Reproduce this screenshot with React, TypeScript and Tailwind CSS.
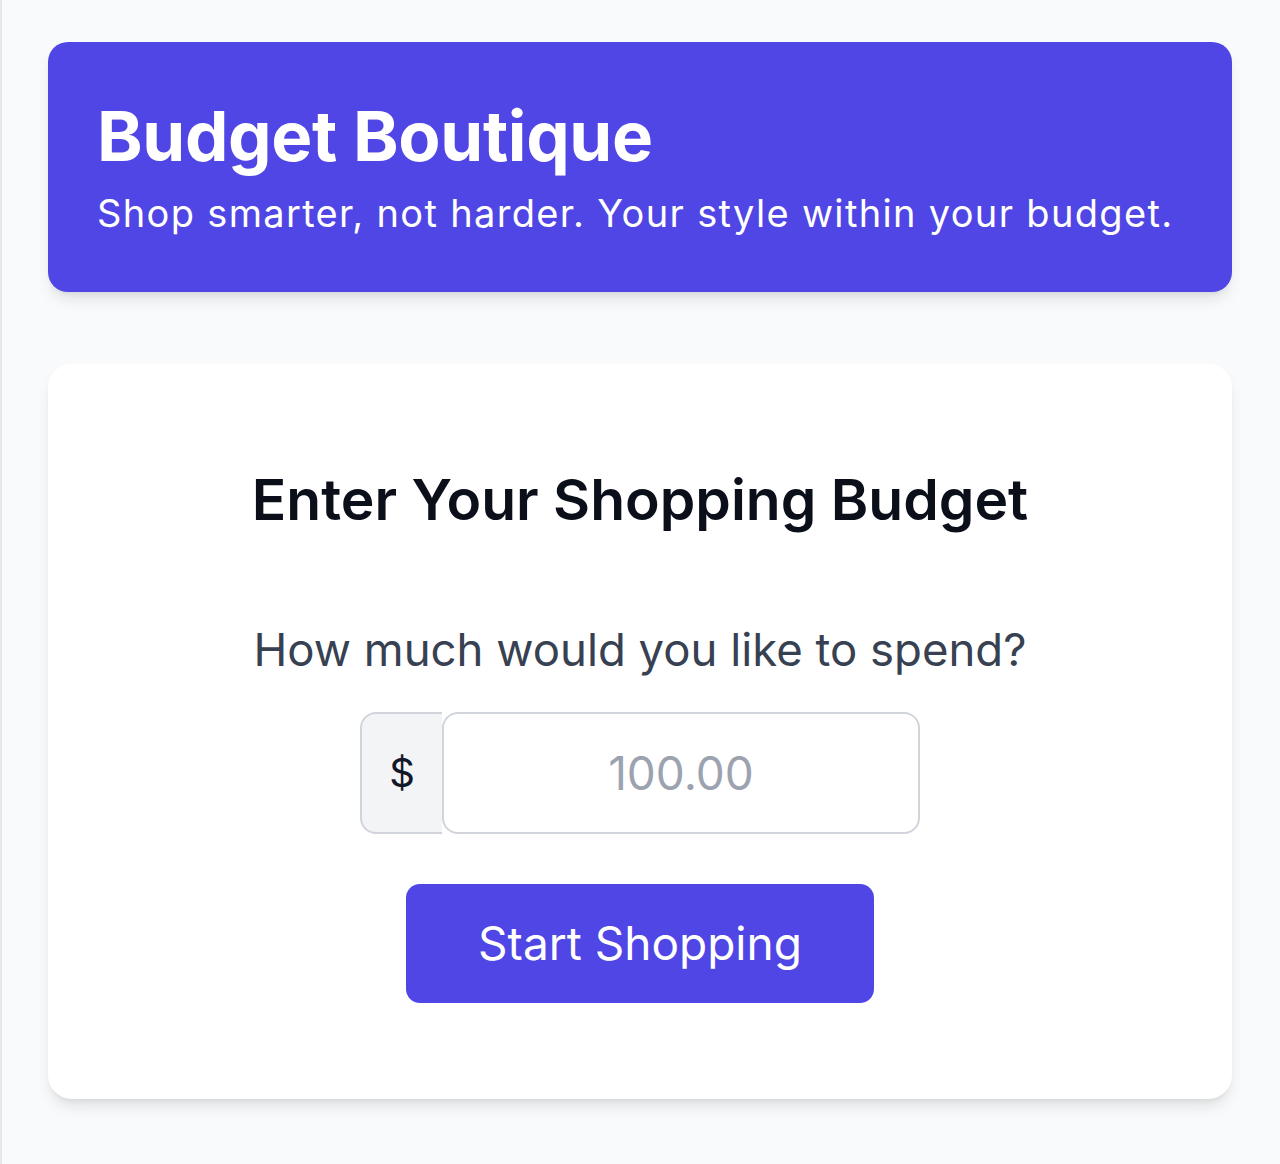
import { useState } from "react";

export default function App() {
  const [budget, setBudget] = useState("");

  return (
    <div className="min-h-screen bg-[#f9fafb] border-l-2 border-[#e5e7eb] pl-[46px] pr-[48px] pt-[42px] pb-16 font-['Inter',sans-serif]">
      {/* Header */}
      <header className="rounded-[20px] bg-[#4f46e5] px-[49px] pt-[57px] pb-[54px] text-white shadow-[0_10px_15px_-3px_rgba(0,0,0,0.1),0_4px_6px_-4px_rgba(0,0,0,0.1)]">
        <h1 className="text-[69px] font-bold leading-[1.1] tracking-[-0.005em]">Budget Boutique</h1>
        <p className="mt-[14px] text-[38px] leading-[1.3] tracking-[0.035em]">
          Shop smarter, not harder. Your style within your budget.
        </p>
      </header>

      {/* Budget form */}
      <main className="mt-[72px] flex flex-col items-center rounded-[24px] bg-white px-12 pt-[102px] pb-[96px] shadow-[0_10px_15px_-3px_rgba(0,0,0,0.1),0_4px_6px_-4px_rgba(0,0,0,0.1)]">
        <h2 className="text-[57px] font-semibold leading-[1.2] text-[#0b0f19]">Enter Your Shopping Budget</h2>
        <label htmlFor="budget" className="mt-[88px] text-[45.5px] leading-[1.2] text-[#374151]">
          How much would you like to spend?
        </label>
        <div className="mt-[35px] flex h-[122px] w-[560px]">
          <span className="flex w-[82px] shrink-0 items-center justify-center rounded-l-[16px] border-2 border-r-0 border-[#d1d5db] bg-[#f3f4f6] text-[40px] text-[#111827]">
            $
          </span>
          <input
            id="budget"
            value={budget}
            onChange={(e) => setBudget(e.target.value)}
            placeholder="100.00"
            className="min-w-0 flex-1 rounded-[16px] border-2 border-[#d1d5db] bg-white text-center text-[46px] text-[#111827] outline-none placeholder:text-[#9ca3af]"
          />
        </div>
        <button className="mt-[50px] h-[119px] rounded-[14px] bg-[#4f46e5] px-[72px] text-[46px] text-white">
          Start Shopping
        </button>
      </main>
    </div>
  );
}
